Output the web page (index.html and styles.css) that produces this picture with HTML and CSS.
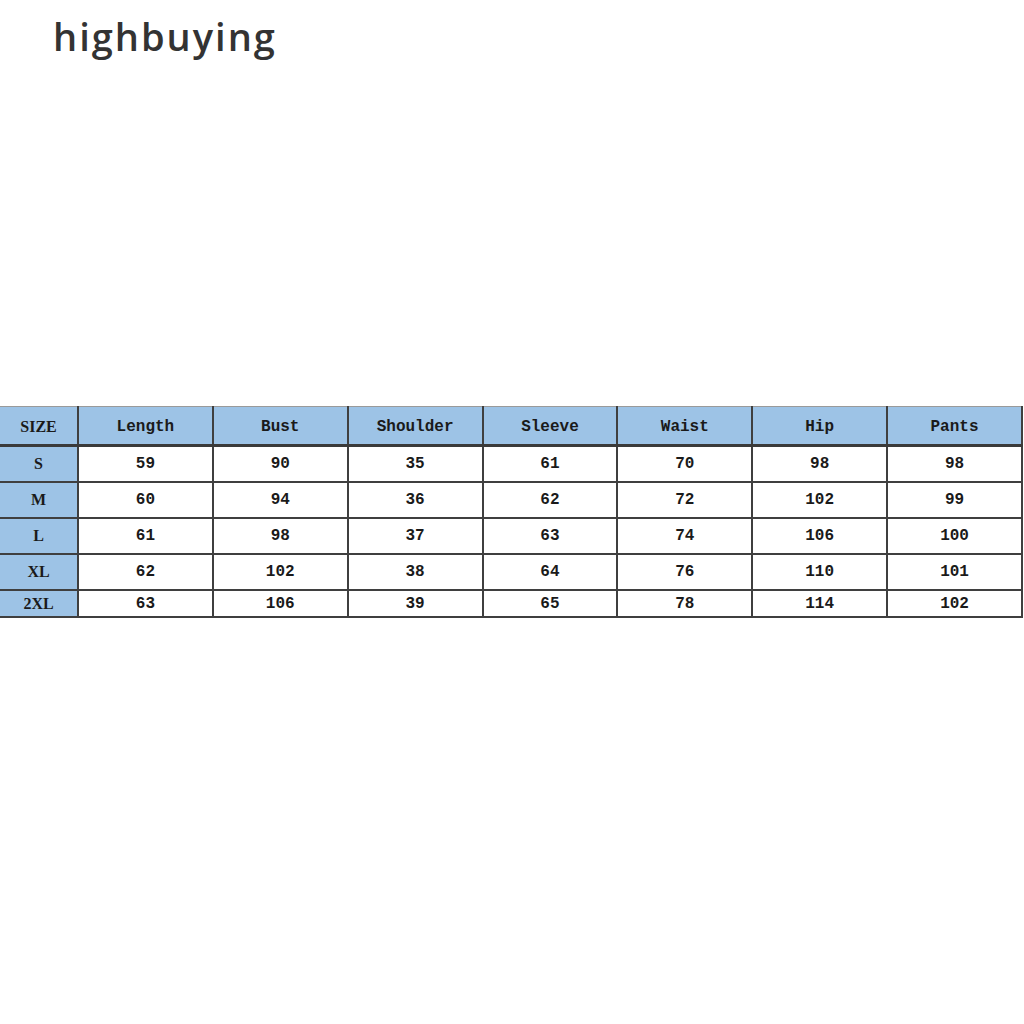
FILE: index.html
```html
<!DOCTYPE html>
<html>
<head>
<meta charset="utf-8">
<link rel="stylesheet" href="styles.css">
</head>
<body>
<div class="brand">highbuying</div>
<div class="spacer"></div>
<table class="size-table">
  <colgroup>
    <col class="c-size"><col><col><col><col><col><col><col>
  </colgroup>
  <thead>
    <tr>
      <th>SIZE</th><th>Length</th><th>Bust</th><th>Shoulder</th><th>Sleeve</th><th>Waist</th><th>Hip</th><th>Pants</th>
    </tr>
  </thead>
  <tbody>
    <tr><th>S</th><td>59</td><td>90</td><td>35</td><td>61</td><td>70</td><td>98</td><td>98</td></tr>
    <tr><th>M</th><td>60</td><td>94</td><td>36</td><td>62</td><td>72</td><td>102</td><td>99</td></tr>
    <tr><th>L</th><td>61</td><td>98</td><td>37</td><td>63</td><td>74</td><td>106</td><td>100</td></tr>
    <tr><th>XL</th><td>62</td><td>102</td><td>38</td><td>64</td><td>76</td><td>110</td><td>101</td></tr>
    <tr class="last"><th>2XL</th><td>63</td><td>106</td><td>39</td><td>65</td><td>78</td><td>114</td><td>102</td></tr>
  </tbody>
</table>
</body>
</html>
```
FILE: styles.css
```css
html, body {
  margin: 0;
  padding: 0;
  background: #ffffff;
}
.brand {
  font-family: "Open Sans", "Noto Sans", sans-serif;
  font-weight: 600;
  font-size: 38px;
  letter-spacing: 2px;
  color: #333333;
  padding: 11px 0 0 53px;
  line-height: 50px;
  height: 58px;
}
.spacer {
  height: 337px;
}
.size-table {
  width: 1023px;
  border-collapse: collapse;
  table-layout: fixed;
  font-family: "Liberation Mono", "DejaVu Sans Mono", monospace;
  font-weight: bold;
  font-size: 16px;
  color: #1a1a1a;
  text-align: center;
}
.c-size {
  width: 78px;
}
.size-table th,
.size-table td {
  border: 2px solid #3f3f3f;
  padding: 0;
  height: 34px;
}
.size-table thead th {
  background: #9dc3e6;
  height: 39px;
  padding-top: 3px;
  box-sizing: border-box;
  border-top: 1px solid #9a9a9a;
  border-bottom: 3px solid #3a3a3a;
}
.size-table tbody th {
  background: #9dc3e6;
  font-family: "Liberation Serif", serif;
  font-size: 16px;
}
.size-table thead th:first-child {
  font-family: "Liberation Serif", serif;
  font-size: 16px;
}
.size-table tr.last th,
.size-table tr.last td {
  height: 25px;
}
.size-table th:first-child {
  border-left: none;
}
.size-table th:last-child,
.size-table td:last-child {
  border-right: 2px solid #3f3f3f;
}
```
